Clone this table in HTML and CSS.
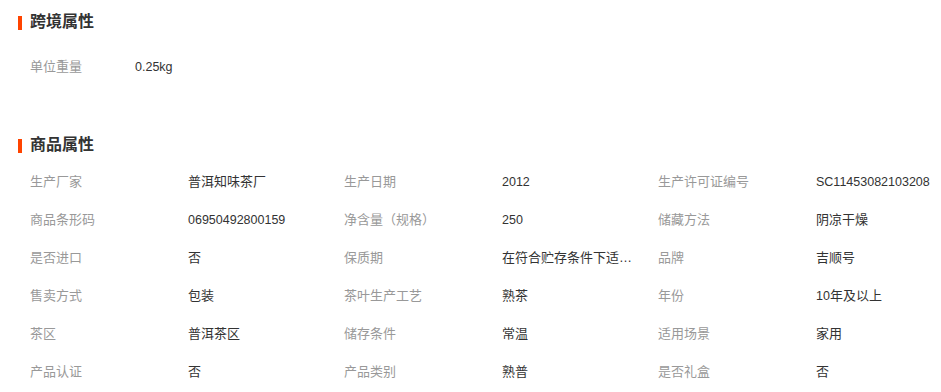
FILE: index.html
```html
<!DOCTYPE html>
<html lang="zh-CN">
<head>
<meta charset="utf-8">
<title>属性</title>
<link rel="stylesheet" href="styles.css">
</head>
<body>
<section class="section first">
  <h2 class="section-title">跨境属性</h2>
  <div class="attr-list single">
    <div class="attr"><span class="label short">单位重量</span><span class="value num">0.25kg</span></div>
  </div>
</section>
<section class="section second">
  <h2 class="section-title">商品属性</h2>
  <div class="attr-list grid">
    <div class="attr"><span class="label">生产厂家</span><span class="value">普洱知味茶厂</span></div>
    <div class="attr"><span class="label">生产日期</span><span class="value num">2012</span></div>
    <div class="attr"><span class="label">生产许可证编号</span><span class="value num">SC11453082103208</span></div>
    <div class="attr"><span class="label">商品条形码</span><span class="value num">06950492800159</span></div>
    <div class="attr"><span class="label">净含量（规格）</span><span class="value num">250</span></div>
    <div class="attr"><span class="label">储藏方法</span><span class="value">阴凉干燥</span></div>
    <div class="attr"><span class="label">是否进口</span><span class="value">否</span></div>
    <div class="attr"><span class="label">保质期</span><span class="value clip" title="在符合贮存条件下适宜长期存放">在符合贮存条件下适宜长期存放</span></div>
    <div class="attr"><span class="label">品牌</span><span class="value">吉顺号</span></div>
    <div class="attr"><span class="label">售卖方式</span><span class="value">包装</span></div>
    <div class="attr"><span class="label">茶叶生产工艺</span><span class="value">熟茶</span></div>
    <div class="attr"><span class="label">年份</span><span class="value"><span class="num">10</span>年及以上</span></div>
    <div class="attr"><span class="label">茶区</span><span class="value">普洱茶区</span></div>
    <div class="attr"><span class="label">储存条件</span><span class="value">常温</span></div>
    <div class="attr"><span class="label">适用场景</span><span class="value">家用</span></div>
    <div class="attr"><span class="label">产品认证</span><span class="value">否</span></div>
    <div class="attr"><span class="label">产品类别</span><span class="value">熟普</span></div>
    <div class="attr"><span class="label">是否礼盒</span><span class="value">否</span></div>
  </div>
</section>
</body>
</html>
```
FILE: styles.css
```css
html, body {
  margin: 0;
  padding: 0;
  background: #ffffff;
}
body {
  font-family: "Liberation Sans", "Noto Sans CJK SC", sans-serif;
  font-size: 13px;
  color: #333333;
  width: 941px;
  height: 392px;
  overflow: hidden;
}
.section {
  padding-left: 18px;
}
.section.first {
  padding-top: 4px;
}
.section.second {
  margin-top: 41px;
}
.section-title {
  display: flex;
  align-items: center;
  gap: 8px;
  height: 36px;
  margin: 0;
  font-size: 16px;
  font-weight: bold;
  color: #333333;
  line-height: 36px;
}
.section-title::before {
  content: "";
  display: block;
  width: 4px;
  height: 14px;
  margin-top: 1px;
  background: #ff4400;
}
.attr-list {
  padding-left: 12px;
}
.attr-list.single {
  margin-top: 8px;
}
.attr-list.grid {
  display: grid;
  grid-template-columns: repeat(3, 314px);
  grid-auto-rows: 38px;
}
.attr {
  display: flex;
  align-items: baseline;
  height: 38px;
  line-height: 38px;
  white-space: nowrap;
}
.label {
  width: 158px;
  flex: none;
  color: #999999;
}
.label.short {
  width: 105px;
}
.value {
  color: #333333;
}
.num {
  font-size: 12.5px;
}
.value.clip {
  max-width: 133px;
  overflow: hidden;
  text-overflow: ellipsis;
}
```
